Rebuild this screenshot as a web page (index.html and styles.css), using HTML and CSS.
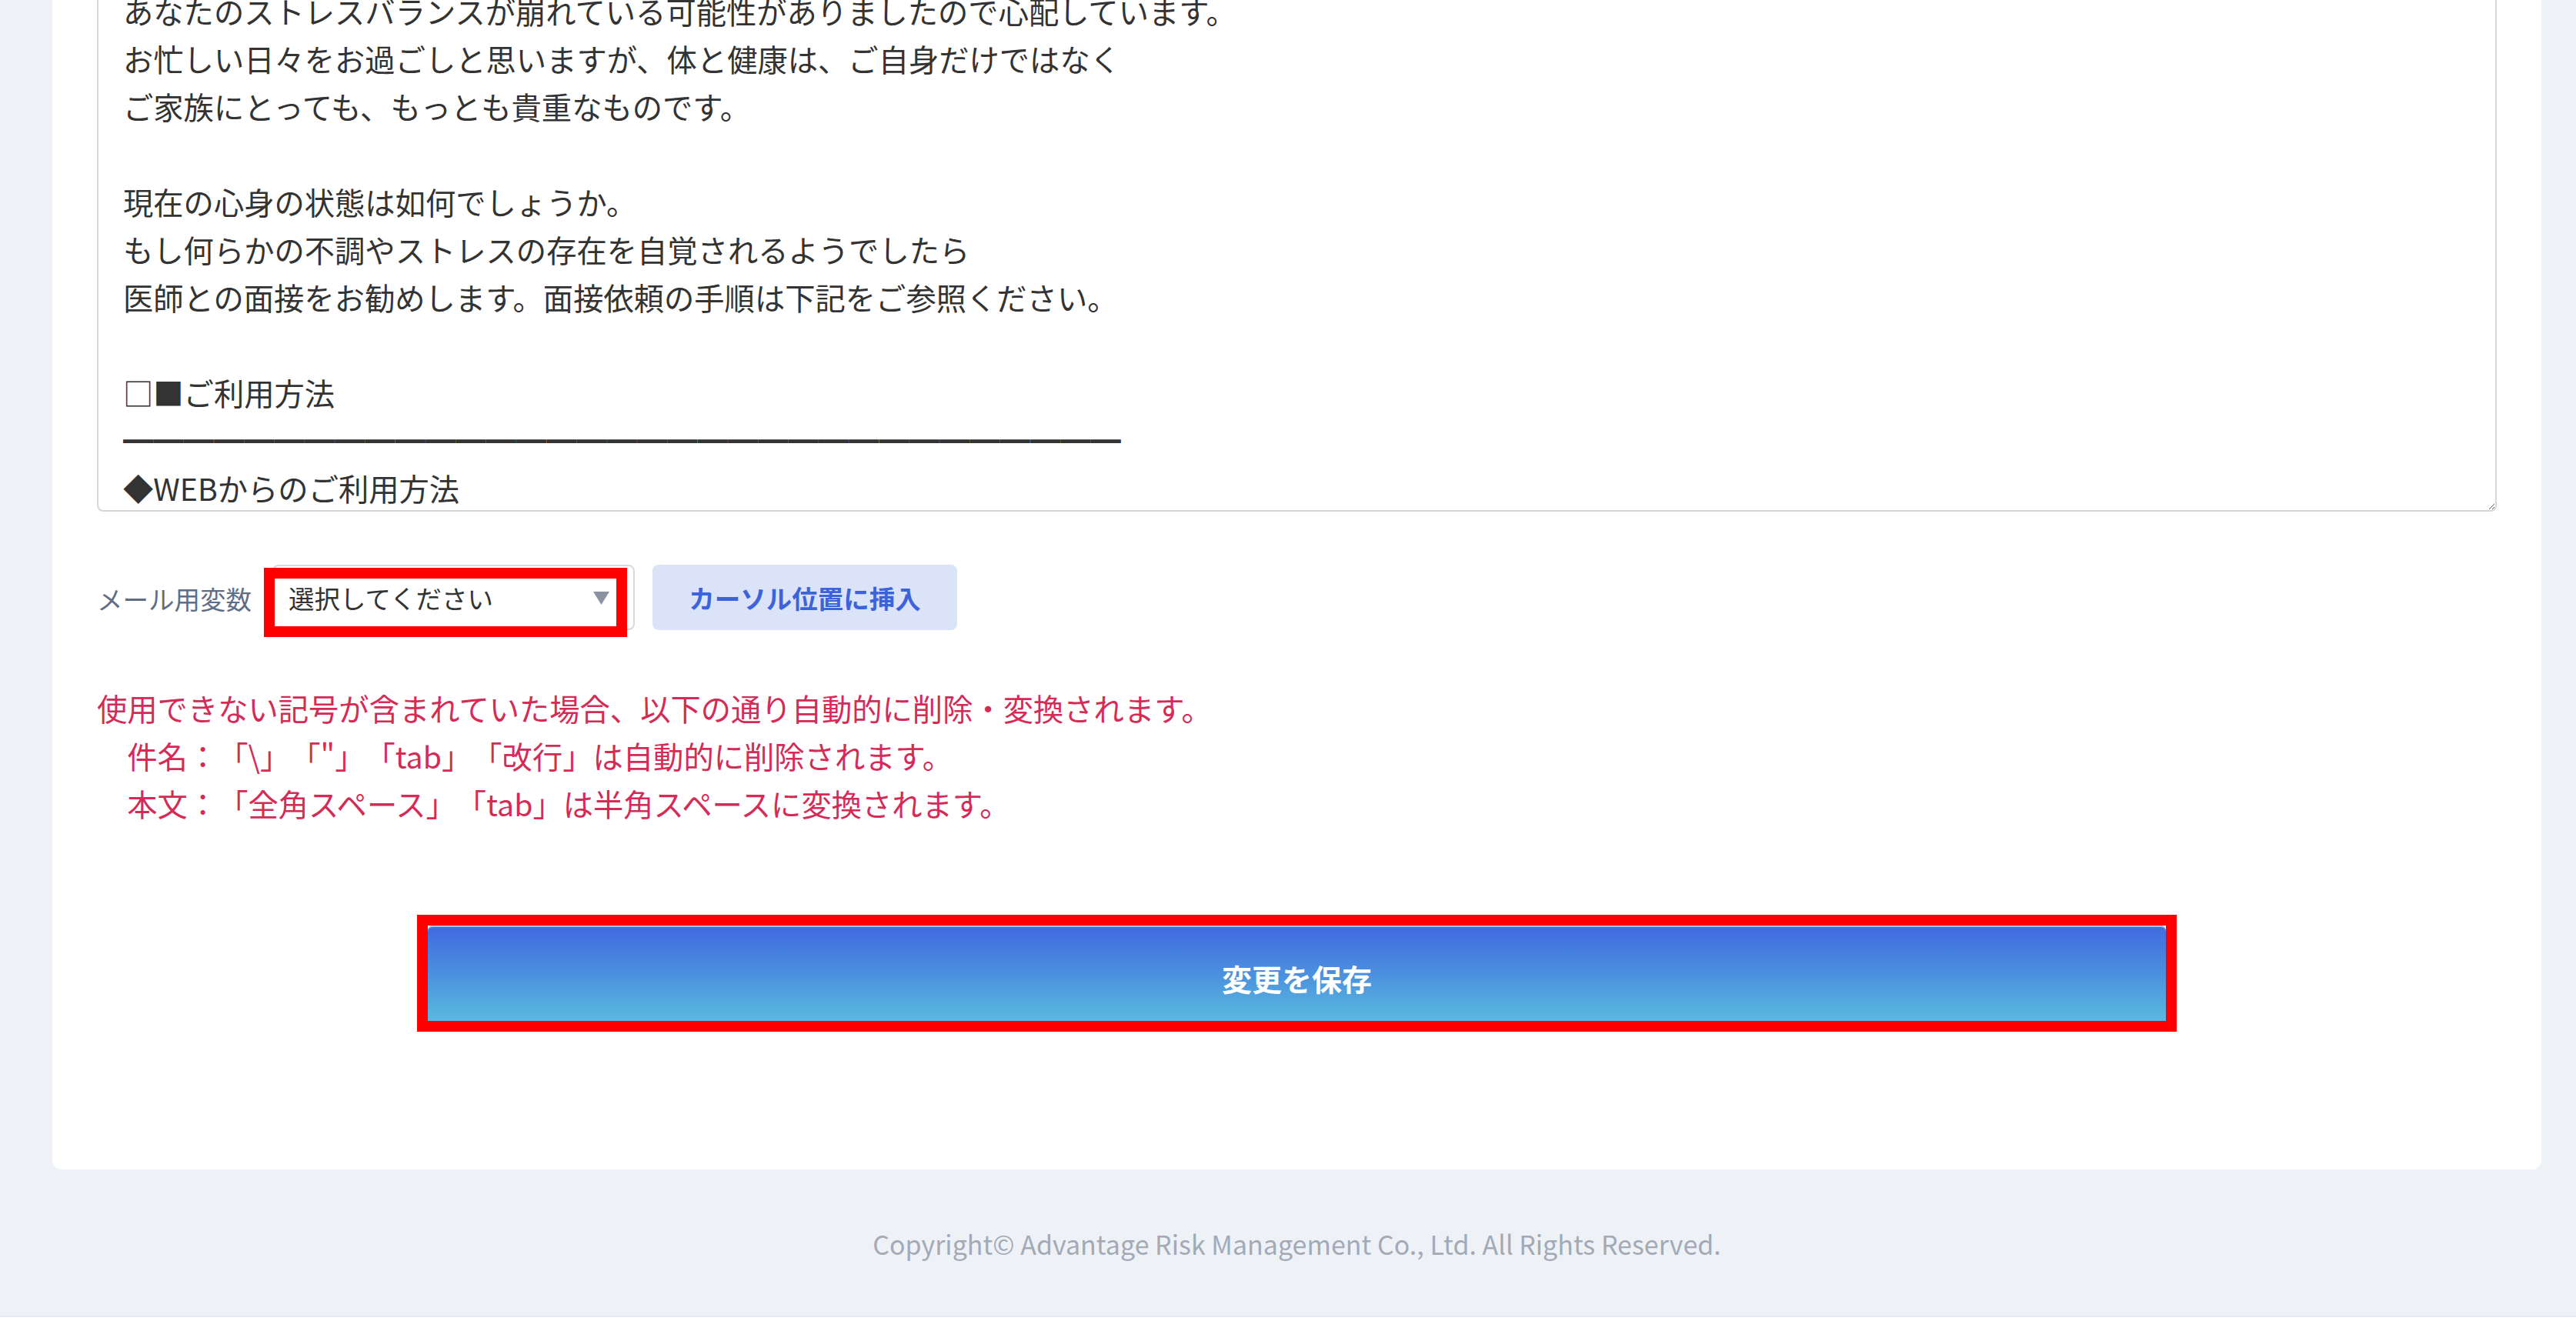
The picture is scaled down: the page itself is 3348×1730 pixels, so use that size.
FILE: index.html
```html
<!DOCTYPE html>
<html lang="ja">
<head>
<meta charset="utf-8">
<title>メール設定</title>
<link rel="stylesheet" href="styles.css">
</head>
<body>
<div class="layout">
  <main class="content">
    <section class="card">
      <textarea class="mail-body" spellcheck="false">あなたのストレスバランスが崩れている可能性がありましたので心配しています。
お忙しい日々をお過ごしと思いますが、体と健康は、ご自身だけではなく
ご家族にとっても、もっとも貴重なものです。

現在の心身の状態は如何でしょうか。
もし何らかの不調やストレスの存在を自覚されるようでしたら
医師との面接をお勧めします。面接依頼の手順は下記をご参照ください。

□■ご利用方法
━━━━━━━━━━━━━━━━━━━━━━━━━━━━━━━━━
◆WEBからのご利用方法
下記URLにアクセスしてください。
</textarea>
      <div class="var-row">
        <span class="var-label">メール用変数</span>
        <div class="select-wrap">
          <select class="var-select">
            <option>選択してください</option>
          </select>
          <svg class="select-arrow" viewBox="0 0 21 17" aria-hidden="true"><path d="M0 0 H21 L10.5 17 Z"/></svg>
          <span class="annot annot-select"></span>
        </div>
        <button class="btn-insert" type="button">カーソル位置に挿入</button>
      </div>
      <div class="notice">
        <p>使用できない記号が含まれていた場合、以下の通り自動的に削除・変換されます。</p>
        <p class="indent">件名：「\」「"」「tab」「改行」は自動的に削除されます。</p>
        <p class="indent">本文：「全角スペース」「tab」は半角スペースに変換されます。</p>
      </div>
      <div class="save-wrap">
        <button class="btn-save" type="button">変更を保存</button>
        <span class="annot annot-save"></span>
      </div>
    </section>
  </main>
  <footer class="footer">Copyright© Advantage Risk Management Co., Ltd. All Rights Reserved.</footer>
</div>
</body>
</html>
```

FILE: styles.css
```css
* { box-sizing: border-box; }

html, body {
  margin: 0;
  padding: 0;
  background: #ffffff;
}

body {
  font-family: "Noto Sans CJK JP", "Noto Sans", sans-serif;
  color: #333333;
  overflow: hidden;
  text-spacing-trim: space-all;
}

.layout {
  background: #eef2f6;
  padding: 0 45px 0 68px;
  margin-top: -66px;
  border-bottom: 2px solid #e6ebf0;
}

.card {
  background: #ffffff;
  border-radius: 0 0 12px 12px;
  padding: 40px 58px 181px;
}

.mail-body {
  display: block;
  width: 100%;
  height: 691px;
  margin: 0;
  padding: 7px 32px 12px;
  border: 2px solid #d3d8de;
  border-radius: 8px;
  font-family: "Noto Sans CJK JP", sans-serif;
  font-size: 39.3px;
  line-height: 62px;
  color: #333333;
  background: #ffffff;
  resize: vertical;
  overflow: hidden;
  white-space: pre;
  text-spacing-trim: space-all;
}

.var-row {
  display: flex;
  align-items: center;
  margin-top: 68px;
  height: 86px;
}

.var-label {
  font-size: 33.5px;
  color: #5f6e86;
  margin-right: 27px;
  margin-top: 2px;
  white-space: nowrap;
}

.select-wrap {
  position: relative;
  width: 471px;
  height: 85px;
}

.var-select {
  -webkit-appearance: none;
  appearance: none;
  width: 100%;
  height: 100%;
  margin: 0;
  border: 2px solid #d5dae0;
  border-radius: 8px;
  background: #ffffff;
  padding: 0 60px 0 19px;
  font-family: "Noto Sans CJK JP", sans-serif;
  font-size: 33.5px;
  color: #333333;
}

.select-arrow {
  position: absolute;
  left: 417px;
  top: 35px;
  width: 21px;
  height: 17px;
  fill: #8a93a1;
  pointer-events: none;
}

.btn-insert {
  margin-left: 23px;
  width: 396px;
  height: 85px;
  border: none;
  border-radius: 8px;
  background: #dbe3f8;
  color: #3d63dc;
  font-family: "Noto Sans CJK JP", sans-serif;
  font-size: 33.5px;
  font-weight: 700;
  padding: 0;
}

.notice {
  margin-top: 70px;
  color: #d42b57;
  font-size: 39.3px;
  line-height: 62px;
  text-spacing-trim: space-all;
}

.notice p {
  margin: 0;
  white-space: nowrap;
}

.notice .indent {
  padding-left: 1em;
}

.save-wrap {
  position: relative;
  width: 2259px;
  height: 136px;
  margin: 128px auto 0;
}

.btn-save {
  display: block;
  width: 100%;
  height: 100%;
  border: none;
  border-radius: 6px;
  background: linear-gradient(to bottom, #416ae1 0%, #4b8fdf 45%, #5bc3db 100%);
  box-shadow: inset 0 2px 0 rgba(255, 255, 255, 0.55);
  color: #ffffff;
  font-family: "Noto Sans CJK JP", sans-serif;
  font-size: 39px;
  font-weight: 700;
  padding: 0;
}

.annot {
  position: absolute;
  border: 14px solid #ff0000;
  pointer-events: none;
}

.annot-select {
  left: -11px;
  top: 4px;
  width: 472px;
  height: 90px;
}

.annot-save {
  left: -14px;
  top: -14px;
  right: -14px;
  bottom: -2px;
}

.footer {
  text-align: center;
  color: #a3aab6;
  font-size: 34px;
  line-height: 50px;
  padding: 72px 0 68px;
}
```
